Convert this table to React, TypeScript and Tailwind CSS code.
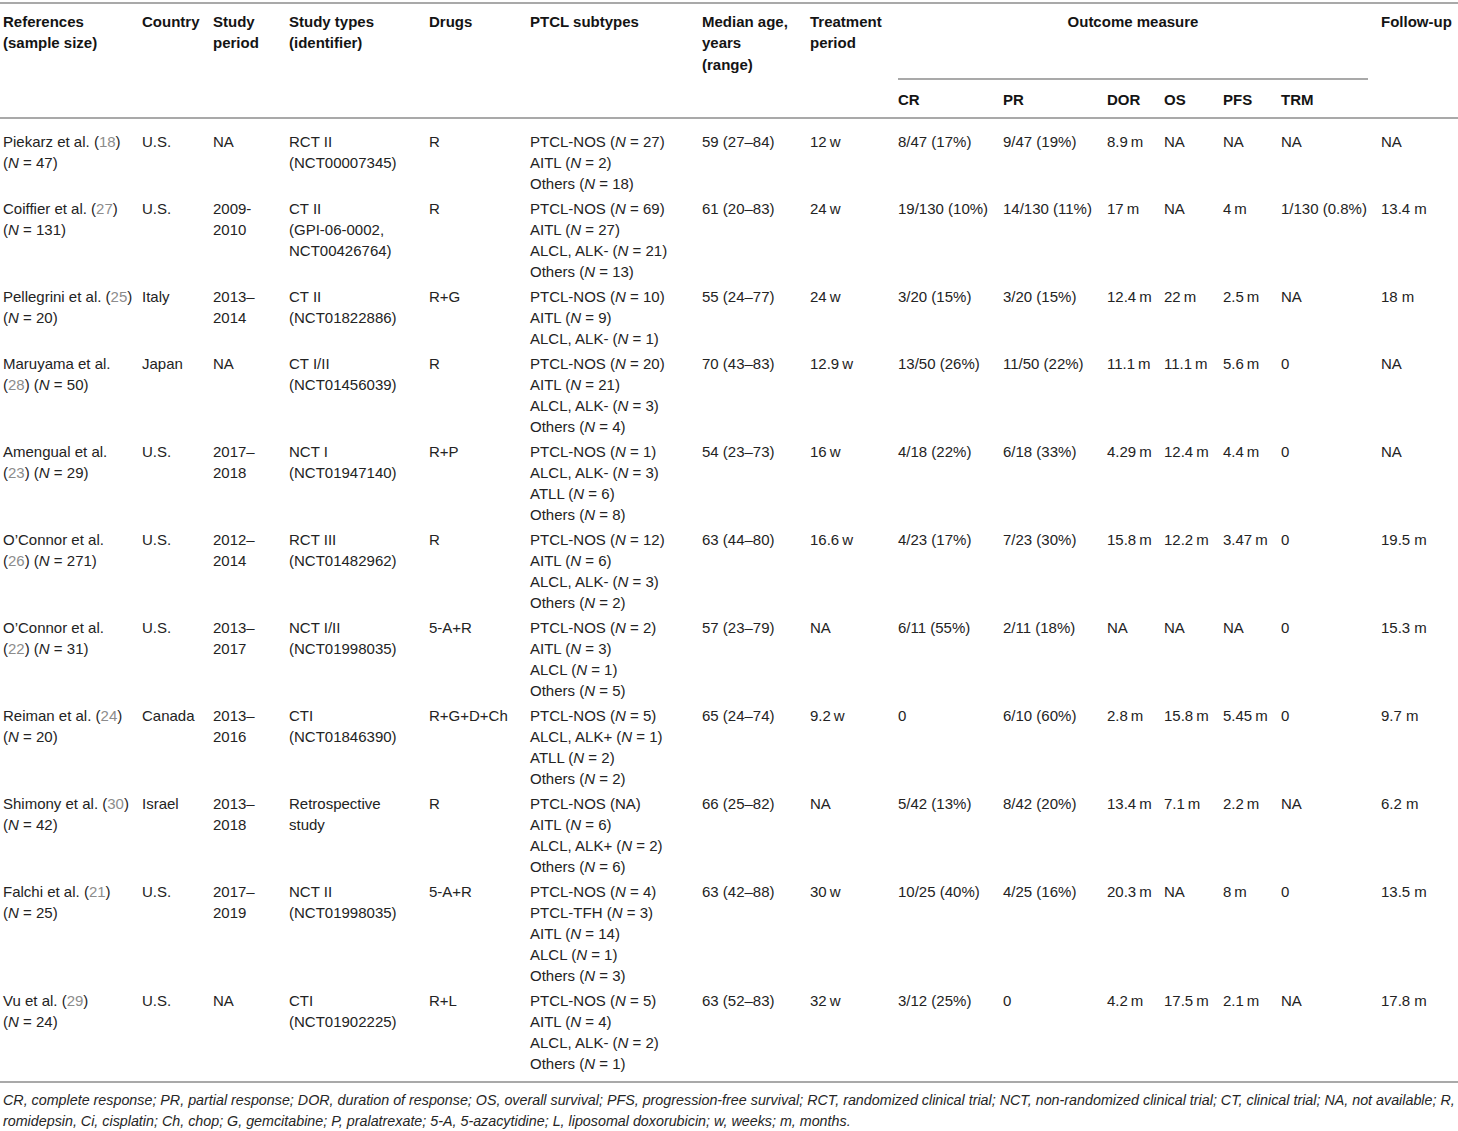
import React from "react";

type Node = React.ReactNode;

const N = (v: string): Node => (
  <>
    (<i>N</i> = {v})
  </>
);

const C = (v: string): Node => (
  <>
    (<span className="text-[#8c8c8c]">{v}</span>)
  </>
);

const T = "\u2009";

type Row = Node[][];

const rows: Row[] = [
  [
    [<>Piekarz et al. {C("18")}</>, N("47")],
    ["U.S."],
    ["NA"],
    ["RCT II", "(NCT00007345)"],
    ["R"],
    [<>PTCL-NOS {N("27")}</>, <>AITL {N("2")}</>, <>Others {N("18")}</>],
    ["59 (27–84)"],
    [`12${T}w`],
    ["8/47 (17%)"],
    ["9/47 (19%)"],
    [`8.9${T}m`],
    ["NA"],
    ["NA"],
    ["NA"],
    ["NA"],
  ],
  [
    [<>Coiffier et al. {C("27")}</>, N("131")],
    ["U.S."],
    ["2009-", "2010"],
    ["CT II", "(GPI-06-0002,", "NCT00426764)"],
    ["R"],
    [
      <>PTCL-NOS {N("69")}</>,
      <>AITL {N("27")}</>,
      <>ALCL, ALK- {N("21")}</>,
      <>Others {N("13")}</>,
    ],
    ["61 (20–83)"],
    [`24${T}w`],
    ["19/130 (10%)"],
    ["14/130 (11%)"],
    [`17${T}m`],
    ["NA"],
    [`4${T}m`],
    ["1/130 (0.8%)"],
    ["13.4 m"],
  ],
  [
    [<>Pellegrini et al. {C("25")}</>, N("20")],
    ["Italy"],
    ["2013–", "2014"],
    ["CT II", "(NCT01822886)"],
    ["R+G"],
    [<>PTCL-NOS {N("10")}</>, <>AITL {N("9")}</>, <>ALCL, ALK- {N("1")}</>],
    ["55 (24–77)"],
    [`24${T}w`],
    ["3/20 (15%)"],
    ["3/20 (15%)"],
    [`12.4${T}m`],
    [`22${T}m`],
    [`2.5${T}m`],
    ["NA"],
    ["18 m"],
  ],
  [
    ["Maruyama et al.", <>{C("28")} {N("50")}</>],
    ["Japan"],
    ["NA"],
    ["CT I/II", "(NCT01456039)"],
    ["R"],
    [
      <>PTCL-NOS {N("20")}</>,
      <>AITL {N("21")}</>,
      <>ALCL, ALK- {N("3")}</>,
      <>Others {N("4")}</>,
    ],
    ["70 (43–83)"],
    [`12.9${T}w`],
    ["13/50 (26%)"],
    ["11/50 (22%)"],
    [`11.1${T}m`],
    [`11.1${T}m`],
    [`5.6${T}m`],
    ["0"],
    ["NA"],
  ],
  [
    ["Amengual et al.", <>{C("23")} {N("29")}</>],
    ["U.S."],
    ["2017–", "2018"],
    ["NCT I", "(NCT01947140)"],
    ["R+P"],
    [
      <>PTCL-NOS {N("1")}</>,
      <>ALCL, ALK- {N("3")}</>,
      <>ATLL {N("6")}</>,
      <>Others {N("8")}</>,
    ],
    ["54 (23–73)"],
    [`16${T}w`],
    ["4/18 (22%)"],
    ["6/18 (33%)"],
    [`4.29${T}m`],
    [`12.4${T}m`],
    [`4.4${T}m`],
    ["0"],
    ["NA"],
  ],
  [
    ["O’Connor et al.", <>{C("26")} {N("271")}</>],
    ["U.S."],
    ["2012–", "2014"],
    ["RCT III", "(NCT01482962)"],
    ["R"],
    [
      <>PTCL-NOS {N("12")}</>,
      <>AITL {N("6")}</>,
      <>ALCL, ALK- {N("3")}</>,
      <>Others {N("2")}</>,
    ],
    ["63 (44–80)"],
    [`16.6${T}w`],
    ["4/23 (17%)"],
    ["7/23 (30%)"],
    [`15.8${T}m`],
    [`12.2${T}m`],
    [`3.47${T}m`],
    ["0"],
    ["19.5 m"],
  ],
  [
    ["O’Connor et al.", <>{C("22")} {N("31")}</>],
    ["U.S."],
    ["2013–", "2017"],
    ["NCT I/II", "(NCT01998035)"],
    ["5-A+R"],
    [
      <>PTCL-NOS {N("2")}</>,
      <>AITL {N("3")}</>,
      <>ALCL {N("1")}</>,
      <>Others {N("5")}</>,
    ],
    ["57 (23–79)"],
    ["NA"],
    ["6/11 (55%)"],
    ["2/11 (18%)"],
    ["NA"],
    ["NA"],
    ["NA"],
    ["0"],
    ["15.3 m"],
  ],
  [
    [<>Reiman et al. {C("24")}</>, N("20")],
    ["Canada"],
    ["2013–", "2016"],
    ["CTI", "(NCT01846390)"],
    ["R+G+D+Ch"],
    [
      <>PTCL-NOS {N("5")}</>,
      <>ALCL, ALK+ {N("1")}</>,
      <>ATLL {N("2")}</>,
      <>Others {N("2")}</>,
    ],
    ["65 (24–74)"],
    [`9.2${T}w`],
    ["0"],
    ["6/10 (60%)"],
    [`2.8${T}m`],
    [`15.8${T}m`],
    [`5.45${T}m`],
    ["0"],
    ["9.7 m"],
  ],
  [
    [<>Shimony et al. {C("30")}</>, N("42")],
    ["Israel"],
    ["2013–", "2018"],
    ["Retrospective", "study"],
    ["R"],
    [
      "PTCL-NOS (NA)",
      <>AITL {N("6")}</>,
      <>ALCL, ALK+ {N("2")}</>,
      <>Others {N("6")}</>,
    ],
    ["66 (25–82)"],
    ["NA"],
    ["5/42 (13%)"],
    ["8/42 (20%)"],
    [`13.4${T}m`],
    [`7.1${T}m`],
    [`2.2${T}m`],
    ["NA"],
    ["6.2 m"],
  ],
  [
    [<>Falchi et al. {C("21")}</>, N("25")],
    ["U.S."],
    ["2017–", "2019"],
    ["NCT II", "(NCT01998035)"],
    ["5-A+R"],
    [
      <>PTCL-NOS {N("4")}</>,
      <>PTCL-TFH {N("3")}</>,
      <>AITL {N("14")}</>,
      <>ALCL {N("1")}</>,
      <>Others {N("3")}</>,
    ],
    ["63 (42–88)"],
    [`30${T}w`],
    ["10/25 (40%)"],
    ["4/25 (16%)"],
    [`20.3${T}m`],
    ["NA"],
    [`8${T}m`],
    ["0"],
    ["13.5 m"],
  ],
  [
    [<>Vu et al. {C("29")}</>, N("24")],
    ["U.S."],
    ["NA"],
    ["CTI", "(NCT01902225)"],
    ["R+L"],
    [
      <>PTCL-NOS {N("5")}</>,
      <>AITL {N("4")}</>,
      <>ALCL, ALK- {N("2")}</>,
      <>Others {N("1")}</>,
    ],
    ["63 (52–83)"],
    [`32${T}w`],
    ["3/12 (25%)"],
    ["0"],
    [`4.2${T}m`],
    [`17.5${T}m`],
    [`2.1${T}m`],
    ["NA"],
    ["17.8 m"],
  ],
];

const COLS =
  "grid grid-cols-[139px_71px_76px_140px_101px_172px_108px_88px_105px_104px_57px_59px_58px_100px_80px]";

function HeadCell({ lines, col }: { lines: string[]; col: string }) {
  return (
    <div className={`${col} row-span-2 row-start-1 pl-[3px] pt-[6.5px]`}>
      {lines.map((l, i) => (
        <div key={i} className="whitespace-nowrap leading-[21.5px]">
          {l}
        </div>
      ))}
    </div>
  );
}

function SubCell({ label, col }: { label: string; col: string }) {
  return (
    <div className={`${col} row-start-2 pl-[3px] pt-[8.5px] leading-[21px] whitespace-nowrap`}>
      {label}
    </div>
  );
}

export default function App() {
  return (
    <div
      className="w-[1458px] bg-white pt-[2px] text-[15px] text-[#232323]"
      style={{ fontFamily: '"Liberation Sans", Arial, Helvetica, sans-serif' }}
    >
      {/* Header */}
      <div
        className={`${COLS} grid-rows-[76px_37px] border-y-2 border-[#a9a9a9] font-bold text-[#141414]`}
      >
        <HeadCell col="col-start-1" lines={["References", "(sample size)"]} />
        <HeadCell col="col-start-2" lines={["Country"]} />
        <HeadCell col="col-start-3" lines={["Study", "period"]} />
        <HeadCell col="col-start-4" lines={["Study types", "(identifier)"]} />
        <HeadCell col="col-start-5" lines={["Drugs"]} />
        <HeadCell col="col-start-6" lines={["PTCL subtypes"]} />
        <HeadCell col="col-start-7" lines={["Median age,", "years", "(range)"]} />
        <HeadCell col="col-start-8" lines={["Treatment", "period"]} />
        <div className="col-start-9 col-span-6 row-start-1 ml-[3px] mr-[10px] border-b-2 border-[#a9a9a9] pt-[6.5px] text-center leading-[21.5px]">
          Outcome measure
        </div>
        <HeadCell col="col-start-15" lines={["Follow-up"]} />
        <SubCell col="col-start-9" label="CR" />
        <SubCell col="col-start-10" label="PR" />
        <SubCell col="col-start-11" label="DOR" />
        <SubCell col="col-start-12" label="OS" />
        <SubCell col="col-start-13" label="PFS" />
        <SubCell col="col-start-14" label="TRM" />
      </div>

      {/* Body */}
      <div className="border-b-2 border-[#a9a9a9] pt-[9.5px] pb-[5.5px]">
        {rows.map((row, ri) => (
          <div key={ri} className={`${COLS} py-[2px]`}>
            {row.map((cell, ci) => (
              <div key={ci} className="pl-[3px]">
                {cell.map((line, li) => (
                  <div key={li} className="whitespace-nowrap leading-[21px]">
                    {line}
                  </div>
                ))}
              </div>
            ))}
          </div>
        ))}
      </div>

      {/* Footnote */}
      <div className="pl-[3px] pt-[6.5px] pb-[8px] text-[14.3px] italic leading-[21px] text-[#262626]">
        <div className="whitespace-nowrap">
          CR, complete response; PR, partial response; DOR, duration of response; OS, overall survival; PFS,
          progression-free survival; RCT, randomized clinical trial; NCT, non-randomized clinical trial; CT,
          clinical trial; NA, not available; R,
        </div>
        <div className="whitespace-nowrap">
          romidepsin, Ci, cisplatin; Ch, chop; G, gemcitabine; P, pralatrexate; 5-A, 5-azacytidine; L,
          liposomal doxorubicin; w, weeks; m, months.
        </div>
      </div>
    </div>
  );
}
